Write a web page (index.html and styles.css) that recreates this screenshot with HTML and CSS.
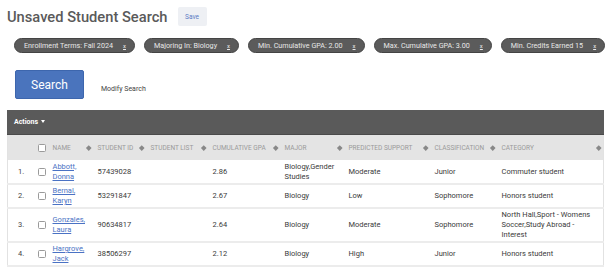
FILE: index.html
```html
<!DOCTYPE html>
<html lang="en">
  <head>
    <meta charset="UTF-8" />
    <title>Unsaved Student Search</title>
    <link rel="stylesheet" href="styles.css">
  </head>
  <body>
    <div class="page-head">
      <h1>Unsaved Student Search</h1>
      <button class="save">Save</button>
    </div>

    <div class="chips">
      <span class="chip">Enrollment Terms: Fall 2024 <span class="chip-x">x</span></span>
      <span class="chip">Majoring In: Biology <span class="chip-x">x</span></span>
      <span class="chip">Min. Cumulative GPA: 2.00 <span class="chip-x">x</span></span>
      <span class="chip">Max. Cumulative GPA: 3.00 <span class="chip-x">x</span></span>
      <span class="chip">Min. Credits Earned 15 <span class="chip-x">x</span></span>
      <span class="chip">Max. Credits Earned 60 <span class="chip-x">x</span></span>
    </div>

    <div class="search-row">
      <button class="search">Search</button>
      <a class="modify">Modify Search</a>
    </div>

    <section class="results">
      <div class="actions">Actions <span class="caret"></span></div>

      <table>
        <colgroup>
          <col style="width: 26px" />
          <col style="width: 15px" />
          <col style="width: 45px" />
          <col style="width: 53px" />
          <col style="width: 62px" />
          <col style="width: 72px" />
          <col style="width: 64px" />
          <col style="width: 86px" />
          <col style="width: 67px" />
          <col />
        </colgroup>
        <thead>
          <tr>
            <th></th>
            <th class="cb"><span class="box"></span></th>
            <th><div class="th">Name <span class="sort"></span></div></th>
            <th><div class="th">Student ID <span class="sort"></span></div></th>
            <th><div class="th">Student List <span class="sort"></span></div></th>
            <th><div class="th">Cumulative GPA <span class="sort"></span></div></th>
            <th><div class="th">Major <span class="sort"></span></div></th>
            <th><div class="th">Predicted Support <span class="sort"></span></div></th>
            <th><div class="th">Classification <span class="sort"></span></div></th>
            <th><div class="th">Category <span class="sort"></span></div></th>
          </tr>
        </thead>
        <tbody>
          <tr>
            <td class="num">1.</td>
            <td class="cb"><span class="box"></span></td>
            <td><a class="name">Abbott,<br />Donna</a></td>
            <td>57439028</td>
            <td></td>
            <td>2.86</td>
            <td>Biology,Gender Studies</td>
            <td>Moderate</td>
            <td>Junior</td>
            <td>Commuter student</td>
          </tr>
          <tr>
            <td class="num">2.</td>
            <td class="cb"><span class="box"></span></td>
            <td><a class="name">Bernal,<br />Karyn</a></td>
            <td>53291847</td>
            <td></td>
            <td>2.67</td>
            <td>Biology</td>
            <td>Low</td>
            <td>Sophomore</td>
            <td>Honors student</td>
          </tr>
          <tr>
            <td class="num">3.</td>
            <td class="cb"><span class="box"></span></td>
            <td><a class="name">Gonzales,<br />Laura</a></td>
            <td>90634817</td>
            <td></td>
            <td>2.64</td>
            <td>Biology</td>
            <td>Moderate</td>
            <td>Sophomore</td>
            <td>North Hall,Sport - Womens Soccer,Study Abroad - Interest</td>
          </tr>
          <tr>
            <td class="num">4.</td>
            <td class="cb"><span class="box"></span></td>
            <td><a class="name">Hargrove,<br />Jack</a></td>
            <td>38506297</td>
            <td></td>
            <td>2.12</td>
            <td>Biology</td>
            <td>High</td>
            <td>Junior</td>
            <td>Honors student</td>
          </tr>
        </tbody>
      </table>
    </section>
  </body>
</html>
```

FILE: styles.css
```css
html,
body {
  overflow: hidden;
}

body {
  margin: 0;
  padding: 7px 0 0 7px;
  background: #fff;
  font-family: Roboto, "Liberation Sans", sans-serif;
  color: #3a3a3a;
}

.page-head {
  display: flex;
  align-items: center;
  gap: 10px;
  height: 19px;
}

h1 {
  margin: 0;
  font-size: 14.7px;
  font-weight: 500;
  color: #5a5a5a;
}

.save {
  height: 19px;
  width: 29px;
  padding: 0;
  border: none;
  border-radius: 2px;
  background: #eef0f4;
  color: #5a7cc4;
  font-family: inherit;
  font-size: 6.5px;
}

.chips {
  display: flex;
  gap: 9px;
  margin-top: 12px;
  padding-left: 7px;
  white-space: nowrap;
}

.chip {
  flex-shrink: 0;
  display: flex;
  align-items: center;
  height: 13px;
  padding: 0 8px 0 9px;
  border: 1px solid #444;
  border-radius: 8px;
  background: #5b5b5b;
  color: #e8e8e8;
  font-size: 7.2px;
}

.chip-x {
  margin-left: 10px;
  font-size: 6px;
  text-decoration: underline;
}

.search-row {
  display: flex;
  align-items: flex-end;
  gap: 17px;
  margin-top: 17px;
  padding-left: 8px;
}

.search {
  width: 69px;
  height: 29px;
  padding: 0;
  border: 1px solid #3d66ad;
  border-radius: 2px;
  background: #4a74bd;
  color: #fff;
  font-family: inherit;
  font-size: 12px;
}

.modify {
  margin-bottom: 6px;
  font-size: 7px;
  color: #444;
}

.results {
  margin-top: 11px;
  width: 597px;
}

.actions {
  display: flex;
  align-items: center;
  gap: 3px;
  height: 25px;
  padding-left: 7px;
  background: #5a5a5a;
  border-bottom: 1px solid #4a4a4a;
  box-sizing: border-box;
  color: #fff;
  font-size: 7px;
  font-weight: 700;
}

.caret {
  width: 0;
  height: 0;
  border-left: 2.5px solid transparent;
  border-right: 2.5px solid transparent;
  border-top: 3px solid #fff;
  margin-top: -2px;
}

table {
  width: 597px;
  table-layout: fixed;
  border-collapse: collapse;
  border-left: 1px solid #e2e2e2;
  border-right: 1px solid #e2e2e2;
  border-bottom: 2px solid #e2e2e2;
  font-size: 7.5px;
}

thead tr {
  height: 25px;
  background: #e4e4e4;
}

th {
  padding: 0 3px 0 4px;
  font-size: 6.5px;
  font-weight: 400;
  color: #9a9a9a;
  text-transform: uppercase;
  text-align: left;
  white-space: nowrap;
}

.th {
  display: flex;
  align-items: center;
  justify-content: space-between;
}

.sort {
  width: 3.5px;
  height: 3.5px;
  background: #888;
  transform: rotate(45deg);
  flex-shrink: 0;
}

td {
  padding: 1px 3px 1px 4px;
  line-height: 10px;
  vertical-align: middle;
  border-bottom: 2px solid #ececec;
}

td.num {
  padding-left: 10px;
  color: #444;
}

.cb {
  padding: 0 0 0 4px;
}

.box {
  display: block;
  width: 6px;
  height: 6px;
  border: 1px solid #9a9a9a;
  border-radius: 1.5px;
  background: #fff;
}

.name {
  color: #4a72c4;
  text-decoration: underline;
}

tbody tr:first-child td {
  height: 21px;
}
```
